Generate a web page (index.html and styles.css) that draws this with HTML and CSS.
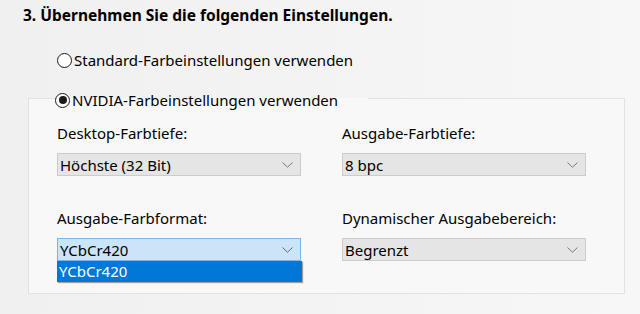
FILE: index.html
```html
<!DOCTYPE html>
<html lang="de">
<head>
    <meta charset="UTF-8">
    <title>Farbeinstellungen</title>
    <link rel="stylesheet" href="styles.css">
</head>
<body>
    <div class="panel">
        <h2 class="step">3. Übernehmen Sie die folgenden Einstellungen.</h2>

        <label class="radio-row">
            <input type="radio" name="mode" class="radio">
            <span>Standard-Farbeinstellungen verwenden</span>
        </label>

        <fieldset class="group">
            <legend class="legend">
                <label class="radio-row">
                    <input type="radio" name="mode" class="radio" checked>
                    <span>NVIDIA-Farbeinstellungen verwenden</span>
                </label>
            </legend>

            <div class="fields">
                <div class="field">
                    <div class="label">Desktop-Farbtiefe:</div>
                    <div class="combo">
                        <span>Höchste (32 Bit)</span>
                        <svg class="chevron" width="11" height="6" viewBox="0 0 11 6"><path d="M0.5 0.5 L5.5 5.2 L10.5 0.5" fill="none" stroke="#7a7a7a" stroke-width="1"/></svg>
                    </div>
                </div>
                <div class="field">
                    <div class="label">Ausgabe-Farbtiefe:</div>
                    <div class="combo">
                        <span>8 bpc</span>
                        <svg class="chevron" width="11" height="6" viewBox="0 0 11 6"><path d="M0.5 0.5 L5.5 5.2 L10.5 0.5" fill="none" stroke="#7a7a7a" stroke-width="1"/></svg>
                    </div>
                </div>
                <div class="field">
                    <div class="label">Ausgabe-Farbformat:</div>
                    <div class="combo focused">
                        <span>YCbCr420</span>
                        <svg class="chevron" width="11" height="6" viewBox="0 0 11 6"><path d="M0.5 0.5 L5.5 5.2 L10.5 0.5" fill="none" stroke="#5c6a78" stroke-width="1"/></svg>
                        <div class="dropdown">
                            <div class="option selected">YCbCr420</div>
                        </div>
                    </div>
                </div>
                <div class="field">
                    <div class="label">Dynamischer Ausgabebereich:</div>
                    <div class="combo">
                        <span>Begrenzt</span>
                        <svg class="chevron" width="11" height="6" viewBox="0 0 11 6"><path d="M0.5 0.5 L5.5 5.2 L10.5 0.5" fill="none" stroke="#7a7a7a" stroke-width="1"/></svg>
                    </div>
                </div>
            </div>
        </fieldset>
    </div>
</body>
</html>
```

FILE: styles.css
```css
* {
    margin: 0;
    padding: 0;
    box-sizing: border-box;
}

body {
    font-family: "Noto Sans", "Open Sans", sans-serif;
    font-size: 15px;
    color: #000;
    background: linear-gradient(to right, #f0f0f0 0%, #f4f4f4 60%, #f7f7f7 100%);
    width: 640px;
    height: 314px;
    overflow: hidden;
}

.panel {
    padding-top: 4px;
}

.step {
    font-size: 15.5px;
    font-weight: bold;
    line-height: 22px;
    padding-left: 23px;
    margin-bottom: 24px;
}

.radio-row {
    display: flex;
    align-items: center;
    gap: 2px;
    line-height: 20px;
    padding-left: 57px;
    height: 20px;
}

.radio {
    appearance: none;
    width: 15px;
    height: 15px;
    border: 1px solid #1a1a1a;
    border-radius: 50%;
    background: #fff;
    display: grid;
    place-content: center;
    margin: 0;
}

.radio:checked::before {
    content: "";
    width: 8px;
    height: 8px;
    border-radius: 50%;
    background: #1a1a1a;
}

.group {
    margin: 17px 0 0 28px;
    width: 597px;
    height: 207px;
    border: 1px solid #e2e2e2;
    background: #f8f8f8;
    padding: 0 0 0 28px;
}

.legend {
    margin-left: -2px;
    padding: 3px 30px 0 0;
}

.legend .radio-row {
    padding-left: 0;
}

.fields {
    display: grid;
    grid-template-columns: 244px 244px;
    column-gap: 41px;
    row-gap: 32px;
    padding-top: 13px;
}

.label {
    line-height: 20px;
    margin-bottom: 10px;
}

.combo {
    position: relative;
    height: 23px;
    background: #e5e5e5;
    border: 1px solid #cccccc;
    display: flex;
    align-items: center;
    justify-content: space-between;
    padding: 0 7px 0 2px;
    line-height: 20px;
}

.combo.focused {
    background: #cce4f7;
    border-color: #7eb4ea;
}

.chevron {
    display: block;
}

.dropdown {
    position: absolute;
    top: 22px;
    left: -1px;
    width: 245px;
    background: #fff;
    box-shadow: 1px 1px 1px rgba(0, 0, 0, 0.35);
}

.option {
    height: 21px;
    line-height: 20px;
    padding-left: 2px;
}

.option.selected {
    background: #0078d7;
    color: #fff;
}
```
